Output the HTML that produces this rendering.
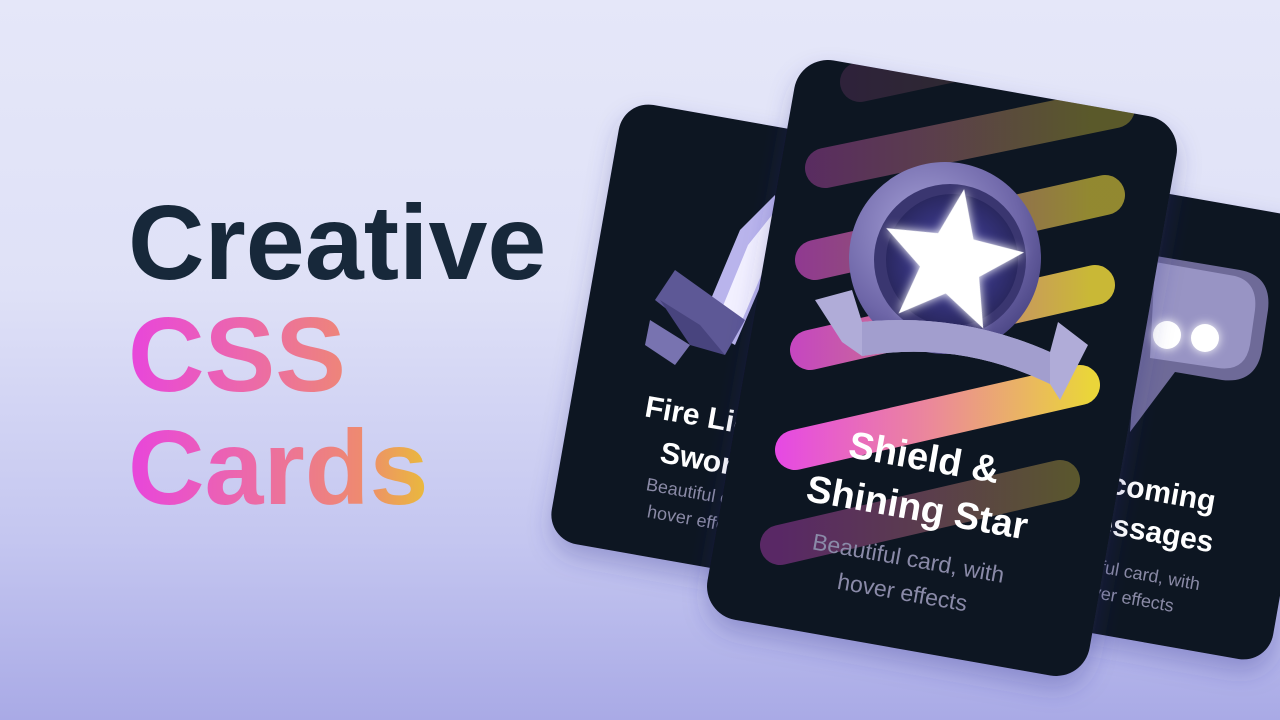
<!DOCTYPE html>
<html><head><meta charset="utf-8"><style>
html,body{margin:0;padding:0;}
body{width:1280px;height:720px;overflow:hidden;background:linear-gradient(180deg,#e5e7f9 0%,#dfe1f7 40%,#c4c6f0 75%,#a9aae6 100%);position:relative;font-family:"Liberation Sans",sans-serif;}
.h{position:absolute;left:128px;font-weight:bold;font-size:106px;letter-spacing:0px;line-height:1;margin:0;}
.g{background:linear-gradient(90deg,#e845dc 0%,#ec6aa8 40%,#ee8a70 75%,#e9c233 100%);-webkit-background-clip:text;background-clip:text;color:transparent;width:310px;}
svg{position:absolute;left:0;top:0;}
</style></head><body>
<div class="h" style="top:190px;color:#17283a;">Creative</div>
<div class="h g" style="top:302px;">CSS</div>
<div class="h g" style="top:415px;">Cards</div>
<svg width="1280" height="720" viewBox="0 0 1280 720" font-family="Liberation Sans, sans-serif">
<defs>
<linearGradient id="sg" gradientUnits="userSpaceOnUse" x1="780" y1="0" x2="1090" y2="0">
<stop offset="0" stop-color="#e64ae2"/><stop offset="0.5" stop-color="#eb8a98"/><stop offset="1" stop-color="#ead53a"/></linearGradient>
<radialGradient id="coin" cx="0.4" cy="0.35" r="0.7"><stop offset="0" stop-color="#a7a2d8"/><stop offset="0.7" stop-color="#6e66a8"/><stop offset="1" stop-color="#4a4584"/></radialGradient>
<radialGradient id="inner" cx="0.5" cy="0.5" r="0.5"><stop offset="0" stop-color="#4a47b0"/><stop offset="1" stop-color="#2a2860"/></radialGradient>
<filter id="glow" x="-50%" y="-50%" width="200%" height="200%"><feGaussianBlur stdDeviation="5" result="b"/><feMerge><feMergeNode in="b"/><feMergeNode in="SourceGraphic"/></feMerge></filter>
<filter id="sh" x="-20%" y="-20%" width="140%" height="140%"><feDropShadow dx="0" dy="12" stdDeviation="12" flood-color="#3a3a90" flood-opacity="0.3"/></filter>
<clipPath id="cc"><rect x="-194" y="-284" width="388" height="568" rx="34" transform="translate(942,368) rotate(10)"/></clipPath>
</defs>
<g filter="url(#sh)"><rect x="-153" y="-223" width="306" height="446" rx="30" fill="#111321" transform="translate(736,346) rotate(10)"/></g>
<g>
<polygon points="700,325 740,230 775,195 778,245 735,345" fill="#b9b4ec"/>
<polygon points="718,318 748,245 772,215 772,250 738,330" fill="#f2f0ff"/>
<polygon points="655,300 675,270 745,320 725,355" fill="#5d5896"/>
<polygon points="660,300 700,325 725,355 690,345" fill="#48447e"/>
<polygon points="650,320 690,345 675,365 645,345" fill="#7873b0"/>
</g>
<g fill="#fff" font-weight="bold" font-size="30" text-anchor="middle">
<text transform="translate(711,428) rotate(10)">Fire Light</text>
<text transform="translate(704,470) rotate(10)">Sword</text>
</g>
<g fill="#8a8aa6" font-size="18" text-anchor="middle">
<text transform="translate(702,500) rotate(10)">Beautiful card,</text>
<text transform="translate(697,526) rotate(10)">hover effects</text>
</g>
<g filter="url(#sh)"><rect x="-153" y="-223" width="306" height="446" rx="30" fill="#111321" transform="translate(1156,418) rotate(10)"/></g>
<g>
<path d="M1150 255 L1240 270 Q1272 276 1268 310 L1262 350 Q1256 384 1222 380 L1175 372 L1130 432 L1135 360 Q1125 340 1130 300 Z" fill="#6e6a98"/>
<path d="M1155 262 L1235 276 Q1258 282 1255 310 L1250 345 Q1245 372 1218 368 L1150 358 Z" fill="#9894c4"/>
<circle cx="1167" cy="335" r="14" fill="#fff" filter="url(#glow)"/>
<circle cx="1205" cy="338" r="14" fill="#fff" filter="url(#glow)"/>
</g>
<g fill="#fff" font-weight="bold" font-size="30" text-anchor="middle">
<text transform="translate(1148,500) rotate(10)">Incoming</text>
<text transform="translate(1141,540) rotate(10)">Messages</text>
</g>
<g fill="#8a8aa6" font-size="18" text-anchor="middle">
<text transform="translate(1124,577) rotate(10)">Beautiful card, with</text>
<text transform="translate(1122,603) rotate(10)">hover effects</text>
</g>
<g filter="url(#sh)"><rect x="-194" y="-284" width="388" height="568" rx="34" fill="#111321" transform="translate(942,368) rotate(10)"/></g>
<g clip-path="url(#cc)" stroke="url(#sg)" stroke-width="40" stroke-linecap="round" fill="none">
<line x1="860" y1="82" x2="1140" y2="22" opacity="0.15"/>
<line x1="825" y1="168" x2="1115" y2="108" opacity="0.35"/>
<line x1="815" y1="260" x2="1105" y2="195" opacity="0.6"/>
<line x1="810" y1="350" x2="1095" y2="285" opacity="0.85"/>
<line x1="795" y1="450" x2="1080" y2="385" opacity="1"/>
<line x1="780" y1="545" x2="1060" y2="480" opacity="0.35"/>
</g>
<circle cx="945" cy="258" r="96" fill="url(#coin)"/>
<circle cx="950" cy="260" r="76" fill="#3a3670"/>
<circle cx="952" cy="260" r="66" fill="url(#inner)"/>
<polygon fill="#fff" filter="url(#glow)" points="952,188 970,236 1022,240 982,272 995,322 952,294 909,322 922,272 882,240 934,236" transform="rotate(10 952 258)"/>
<path d="M815 300 L852 290 L862 322 Q960 312 1050 352 L1058 322 L1088 345 L1060 400 L1050 384 Q960 340 862 356 L842 342 Z" fill="#b0acd8"/>
<path d="M862 322 Q960 312 1050 352 L1050 384 Q960 340 862 356 Z" fill="#a29ece"/>
<g fill="#fff" font-weight="bold" font-size="38" text-anchor="middle">
<text transform="translate(922,470) rotate(10)">Shield &amp;</text>
<text transform="translate(915,520) rotate(10)">Shining Star</text>
</g>
<g fill="#8a8aa8" font-size="23" text-anchor="middle">
<text transform="translate(907,566) rotate(10)">Beautiful card, with</text>
<text transform="translate(901,600) rotate(10)">hover effects</text>
</g>
</svg>
</body></html>
